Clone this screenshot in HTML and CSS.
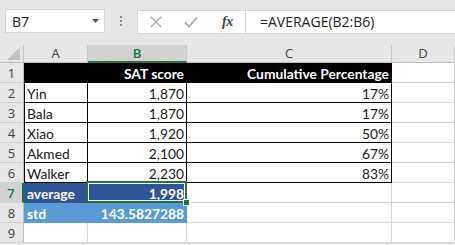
FILE: index.html
```html
<!DOCTYPE html>
<html>
<head>
<meta charset="utf-8">
<link rel="stylesheet" href="styles.css">
</head>
<body>
<div class="app">
  <div class="topbar">
    <div class="namebox">
      <span class="nb-text">B7</span>
      <svg class="nb-arrow" width="7" height="4" viewBox="0 0 7 4"><path d="M0 0H7L3.5 4Z" fill="#5a5a5a"/></svg>
    </div>
    <div class="dots"><span></span><span></span><span></span></div>
    <div class="fbar">
      <div class="btns">
        <svg class="ico" width="12" height="12" viewBox="0 0 12 12"><path d="M1 1L11 11M11 1L1 11" stroke="#a8a8a8" stroke-width="1.4" fill="none"/></svg>
        <svg class="ico" width="14" height="12" viewBox="0 0 14 12"><path d="M1 6.5L5 10.5L13 1.5" stroke="#a8a8a8" stroke-width="1.8" fill="none"/></svg>
        <span class="fx">fx</span>
      </div>
      <div class="finput">=AVERAGE(B2:B6)</div>
    </div>
  </div>
  <div class="sheet">
    <div class="c hd corner"><svg width="13" height="13" viewBox="0 0 13 13"><path d="M13 0V13H0Z" fill="#c4c4c4"/></svg></div>
    <div class="c hd">A</div>
    <div class="c hd hsel">B</div>
    <div class="c hd">C</div>
    <div class="c hd">D</div>

    <div class="c rh">1</div>
    <div class="c blk bl"></div>
    <div class="c blk r">SAT score</div>
    <div class="c blk r">Cumulative Percentage</div>
    <div class="c"></div>

    <div class="c rh">2</div>
    <div class="c bd bl">Yin</div>
    <div class="c bd r">1,870</div>
    <div class="c bd r">17%</div>
    <div class="c"></div>

    <div class="c rh">3</div>
    <div class="c bd bl">Bala</div>
    <div class="c bd r">1,870</div>
    <div class="c bd r">17%</div>
    <div class="c"></div>

    <div class="c rh">4</div>
    <div class="c bd bl">Xiao</div>
    <div class="c bd r">1,920</div>
    <div class="c bd r">50%</div>
    <div class="c"></div>

    <div class="c rh">5</div>
    <div class="c bd bl">Akmed</div>
    <div class="c bd r">2,100</div>
    <div class="c bd r">67%</div>
    <div class="c"></div>

    <div class="c rh">6</div>
    <div class="c bd bl">Walker</div>
    <div class="c bd r">2,230</div>
    <div class="c bd r">83%</div>
    <div class="c"></div>

    <div class="c rh rsel">7</div>
    <div class="c dk">average</div>
    <div class="c dk r active">1,998<span class="handle"></span></div>
    <div class="c"></div>
    <div class="c"></div>

    <div class="c rh">8</div>
    <div class="c lt">std</div>
    <div class="c lt r">143.5827288</div>
    <div class="c"></div>
    <div class="c"></div>

    <div class="c rh">9</div>
    <div class="c"></div>
    <div class="c"></div>
    <div class="c"></div>
    <div class="c"></div>
  </div>
</div>
</body>
</html>
```

FILE: styles.css
```css
html, body {
  margin: 0;
  padding: 0;
}
body {
  width: 455px;
  height: 245px;
  overflow: hidden;
  background: #e6e6e6;
}
.app {
  width: 455px;
}
.topbar {
  height: 45px;
  box-sizing: border-box;
  padding: 9px 0 0 5px;
  display: flex;
  align-items: flex-start;
}
.namebox {
  width: 100px;
  height: 24px;
  box-sizing: border-box;
  background: #fff;
  border: 1px solid #d6d6d6;
  display: flex;
  align-items: center;
  justify-content: space-between;
  padding: 0 5px 0 6px;
  font-family: "Open Sans", "DejaVu Sans", sans-serif;
  font-size: 14px;
  color: #222;
}
.dots {
  width: 32px;
  height: 24px;
  display: flex;
  flex-direction: column;
  align-items: center;
  justify-content: center;
  gap: 2px;
}
.dots span {
  width: 2px;
  height: 2px;
  background: #8a8a8a;
}
.fbar {
  flex: 1;
  height: 24px;
  margin-top: 1px;
  box-sizing: border-box;
  background: #fff;
  display: flex;
  border-top: 1px solid #d6d6d6;
  border-bottom: 1px solid #d6d6d6;
  border-left: 1px solid #d6d6d6;
}
.btns {
  width: 108px;
  display: flex;
  align-items: center;
  padding-left: 12px;
  box-sizing: border-box;
  border-right: 1px solid #d6d6d6;
}
.btns .ico:first-child {
  margin-right: 22px;
}
.btns .ico:nth-child(2) {
  margin-right: 24px;
}
.fx {
  font-family: "Liberation Serif", serif;
  font-style: italic;
  font-weight: bold;
  font-size: 14px;
  color: #444;
  letter-spacing: -0.5px;
}
.finput {
  flex: 1;
  padding-left: 14px;
  font-family: "Open Sans", "DejaVu Sans", sans-serif;
  font-size: 14px;
  line-height: 22px;
  color: #222;
}
.sheet {
  display: grid;
  grid-template-columns: 24px 64px 99px 205px 63px;
  grid-template-rows: 18px repeat(9, 20px);
  background: #fff;
  font-family: Lato, "Liberation Sans", sans-serif;
  font-size: 13.8px;
  color: #1a1a1a;
}
.c {
  box-sizing: border-box;
  border-right: 1px solid #d4d4d4;
  border-bottom: 1px solid #d4d4d4;
  padding: 1px 2px 0 3px;
  line-height: 19px;
  white-space: nowrap;
  overflow: visible;
}
.r {
  text-align: right;
}
.hd {
  background: #e6e6e6;
  border-right-color: #c8c8c8;
  border-bottom-color: #bdbdbd;
  text-align: center;
  padding: 0;
  font-family: "Open Sans", "DejaVu Sans", sans-serif;
  font-size: 13px;
  line-height: 17px;
  color: #444;
}
.corner {
  display: flex;
  align-items: flex-end;
  justify-content: flex-end;
  padding: 0 3px 2px 0;
}
.hsel {
  background: #d2d2d2;
  color: #217346;
  font-weight: 600;
  border-bottom: 2px solid #217346;
}
.rh {
  background: #e6e6e6;
  border-right-color: #bdbdbd;
  border-bottom-color: #d0d0d0;
  text-align: center;
  padding: 0;
  font-family: "Open Sans", "DejaVu Sans", sans-serif;
  font-size: 13px;
  line-height: 20px;
  color: #444;
}
.rsel {
  background: #d2d2d2;
  color: #217346;
  font-weight: 600;
  border-right: 2px solid #217346;
}
.blk {
  background: #000;
  border-color: #000;
  color: #fff;
  font-weight: bold;
}
.bd {
  border-right-color: #000;
  border-bottom-color: #000;
}
.bl {
  box-shadow: inset 1px 0 0 #000;
}
.dk {
  background: #2f5597;
  border-color: #2f5597;
  color: #fff;
  font-weight: bold;
}
.lt {
  background: #5b9bd5;
  border-color: #5b9bd5;
  color: #fff;
  font-weight: bold;
}
.active {
  position: relative;
}
.active::before {
  content: "";
  position: absolute;
  left: -2px;
  top: -2px;
  right: -1px;
  bottom: -1px;
  border: 2px solid #217346;
  box-shadow: inset 0 0 0 1px #fff;
}
.handle {
  position: absolute;
  right: -4px;
  bottom: -4px;
  width: 5px;
  height: 5px;
  background: #217346;
  border: 1px solid #fff;
}
```
